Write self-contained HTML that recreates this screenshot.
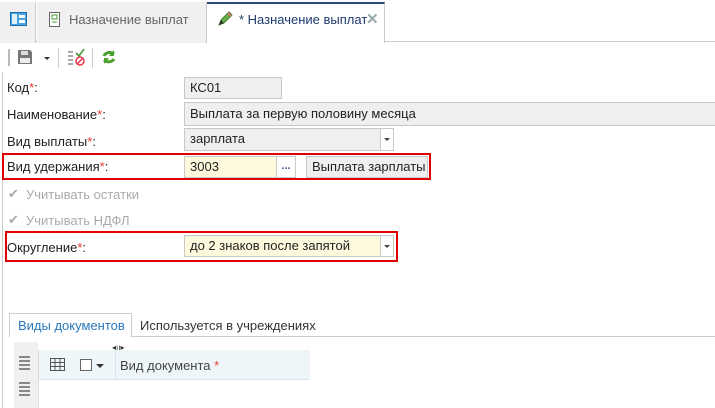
<!DOCTYPE html>
<html><head><meta charset="utf-8"><style>
*{box-sizing:border-box;margin:0;padding:0}
body{width:715px;height:408px;overflow:hidden;background:#fff;font-family:"Liberation Sans",sans-serif;font-size:13px;color:#222;position:relative}
div{white-space:nowrap}
.a{position:absolute}
.lbl{position:absolute;left:7px;font-size:13px}
.r{color:#e53935}
.f{position:absolute;border:1px solid #c8c8c8;background:#efefef;padding:2px 5px;font-size:13px;line-height:16px;overflow:hidden}
.y{background:#fdf9dc}
.dd{position:absolute;width:13px;border-left:1px solid #ccc;background:#fff}
.dd:after{content:"";position:absolute;left:3px;top:9px;border:3px solid transparent;border-top:3px solid #444}
.red{position:absolute;border:2px solid #e00000}
.gray{color:#aaa}
</style></head><body>
<div class="a" style="left:0;top:0;width:715px;height:42px;background:#fff;border-bottom:1px solid #ccc"></div>
<div class="a" style="left:0;top:2px;width:36px;height:41px;background:#f0f0f0;border-right:1px solid #ccc"></div>
<svg class="a" style="left:10px;top:12px" width="17" height="14"><rect x="0.5" y="0.5" width="16" height="13" fill="#4aa3df" stroke="#1a6fb0"/><rect x="2" y="2" width="5" height="10" fill="#dff0fb"/><rect x="9" y="3" width="6" height="3" fill="#fff"/><rect x="9" y="8" width="6" height="3" fill="#fff"/></svg>
<div class="a" style="left:37px;top:2px;width:170px;height:41px;background:#f0f0f0;border-right:1px solid #ccc"></div>
<svg class="a" style="left:48px;top:12px" width="12" height="15"><rect x="1.5" y="0.5" width="10" height="14" fill="#fff" stroke="#666"/><rect x="4" y="3" width="5" height="4" fill="none" stroke="#4a9a3a"/><line x1="4" y1="10" x2="9" y2="10" stroke="#4a9a3a"/></svg>
<div class="a" style="left:69px;top:12px;color:#666">Назначение выплат</div>
<div class="a" style="left:207px;top:2px;width:178px;height:41px;background:#fff;border-top:2px solid #2a4a7f;border-right:1px solid #ccc"></div>
<svg class="a" style="left:217px;top:11px" width="16" height="16"><path d="M2 14 L4 9 L12 1 L15 4 L7 12 Z" fill="#6bb04a" stroke="#3d7a2a"/><path d="M11 2 L14 5" stroke="#e57373" stroke-width="2"/><path d="M2 14 L4 9 L7 12Z" fill="#333"/></svg>
<div class="a" style="left:239px;top:12px;color:#1e3a6e">* Назначение выплат</div>
<div class="a" style="left:366px;top:10px;color:#9aa;font-size:15px;font-weight:bold">✕</div>
<div class="a" style="left:8px;top:49px;width:2px;height:17px;border-left:1px solid #bbb;border-right:1px solid #bbb"></div>
<svg class="a" style="left:17px;top:49px" width="16" height="16"><path d="M1 1H13L15 3V15H1Z" fill="#777"/><rect x="4" y="2" width="7" height="4" fill="#ddd"/><rect x="3" y="9" width="10" height="5" fill="#eee"/></svg>
<div class="a" style="left:44px;top:57px;border:3px solid transparent;border-top:3px solid #333"></div>
<div class="a" style="left:58px;top:48px;width:1px;height:20px;background:#ccc"></div>
<svg class="a" style="left:67px;top:48px" width="18" height="18"><path d="M1 4h5M1 8h5M1 12h5M1 16h5" stroke="#555"/><path d="M9 5l3 3 5-7" stroke="#4a9a3a" stroke-width="1.6" fill="none"/><circle cx="13" cy="13" r="4" fill="none" stroke="#e53950" stroke-width="1.5"/><line x1="10" y1="16" x2="16" y2="10" stroke="#e53950" stroke-width="1.5"/></svg>
<div class="a" style="left:92px;top:48px;width:1px;height:20px;background:#ccc"></div>
<svg class="a" style="left:101px;top:49px" width="16" height="16"><path d="M3 7A6 5 0 0 1 13 5" stroke="#4aa02c" stroke-width="3" fill="none"/><path d="M13 1V7H8Z" fill="#4aa02c"/><path d="M13 10A6 5 0 0 1 3 11" stroke="#4aa02c" stroke-width="3" fill="none"/><path d="M3 15V9H8Z" fill="#4aa02c"/></svg>
<div class="a" style="left:2px;top:72px;width:1px;height:336px;background:#ccc"></div>
<div class="lbl" style="top:80px">Код<span class="r">*</span>:</div>
<div class="f" style="left:184px;top:77px;width:98px;height:22px">КС01</div>
<div class="lbl" style="top:107px">Наименование<span class="r">*</span>:</div>
<div class="f" style="left:184px;top:102px;width:535px;height:24px;padding-top:3px">Выплата за первую половину месяца</div>
<div class="lbl" style="top:134px">Вид выплаты<span class="r">*</span>:</div>
<div class="f" style="left:184px;top:128px;width:210px;height:23px">зарплата</div>
<div class="dd" style="left:380px;top:129px;height:21px"></div>
<div class="red" style="left:2px;top:153px;width:429px;height:27px"></div>
<div class="lbl" style="top:159px">Вид удержания<span class="r">*</span>:</div>
<div class="f y" style="left:184px;top:156px;width:93px;height:22px">3003</div>
<div class="a" style="left:276px;top:156px;width:20px;height:22px;border:1px solid #c8c8c8;background:#fff;color:#3a5a9a;font-size:11px;text-align:center;line-height:18px;font-weight:bold">...</div>
<div class="f" style="left:306px;top:156px;width:122px;height:22px">Выплата зарплаты</div>
<div class="a gray" style="left:8px;top:186px">✔</div><div class="a gray" style="left:26px;top:187px">Учитывать остатки</div>
<div class="a gray" style="left:8px;top:212px">✔</div><div class="a gray" style="left:26px;top:213px">Учитывать НДФЛ</div>
<div class="red" style="left:5px;top:231px;width:393px;height:31px"></div>
<div class="lbl" style="top:240px">Округление<span class="r">*</span>:</div>
<div class="f y" style="left:184px;top:235px;width:210px;height:22px">до 2 знаков после запятой</div>
<div class="dd" style="left:380px;top:236px;height:20px"></div>
<div class="a" style="left:9px;top:313px;width:123px;height:24px;border:1px solid #ccc;border-bottom:none;background:#fff"></div>
<div class="a" style="left:132px;top:336px;width:583px;height:1px;background:#ccc"></div>
<div class="a" style="left:18px;top:318px;color:#2a7ac0">Виды документов</div>
<div class="a" style="left:140px;top:318px;color:#333">Используется в учреждениях</div>
<div class="a" style="left:14px;top:342px;width:24px;height:66px;background:#f0f0f0"></div>
<svg class="a" style="left:19px;top:356px" width="14" height="40"><path d="M0 1h11M0 5h11M0 9h11M0 13h11" stroke="#888" stroke-width="2"/><path d="M0 27h11M0 31h11M0 35h11M0 39h11" stroke="#888" stroke-width="2"/></svg>
<div class="a" style="left:38px;top:350px;width:272px;height:30px;background:#eef6fa;border-bottom:1px solid #d8e4ea"></div>
<div class="a" style="left:115px;top:350px;width:1px;height:30px;background:#d8e4ea"></div>
<div class="a" style="left:38px;top:350px;width:1px;height:58px;background:#ddd"></div>
<div class="a" style="left:112px;top:343px;font-size:8px;color:#333">◂ıı▸</div>
<svg class="a" style="left:50px;top:358px" width="15" height="13"><rect x="0.5" y="0.5" width="14" height="12" fill="none" stroke="#555"/><path d="M5 0v13M10 0v13M0 4.5h15M0 8.5h15" stroke="#555"/></svg>
<div class="a" style="left:80px;top:359px;width:12px;height:12px;border:1px solid #666;background:#fff"></div>
<div class="a" style="left:96px;top:364px;border:4px solid transparent;border-top:4px solid #333"></div>
<div class="a" style="left:120px;top:358px;color:#444">Вид документа <span class="r">*</span></div>
</body></html>
